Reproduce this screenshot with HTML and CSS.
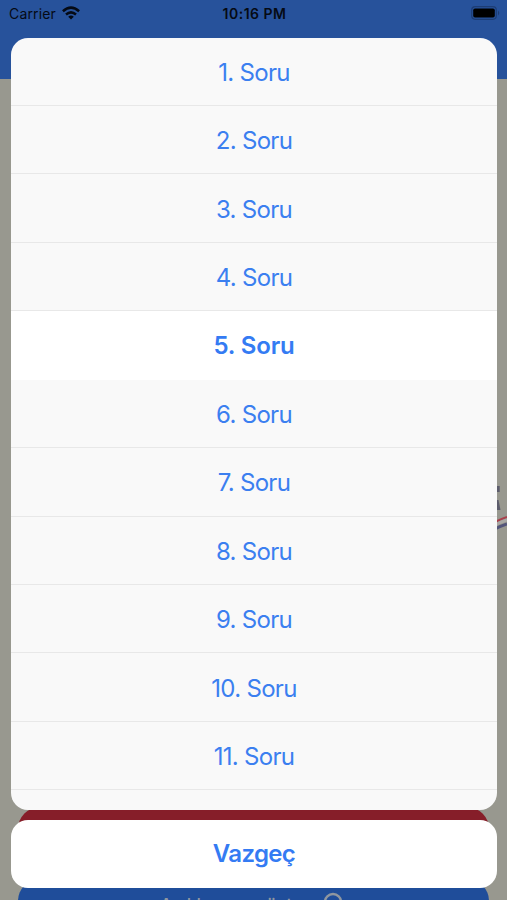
FILE: index.html
```html
<!DOCTYPE html>
<html lang="tr">
<head>
<meta charset="utf-8">
<title>Soru</title>
<link rel="stylesheet" href="styles.css">
</head>
<body>
<div class="screen">
  <div class="backdrop">
    <div class="navbar"></div>
    <div class="page">
      <svg class="artwork" viewBox="0 0 22 60" width="22" height="60">
        <path d="M13.2 11 L13.2 17" stroke="#5d5d6c" stroke-width="3"/>
        <path d="M11 25 L13.5 25 L15.5 35 L11 35 Z" fill="#5d5d6c"/>
        <path d="M10 47 Q16 44 22 42" stroke="#a9404c" stroke-width="2" fill="none"/>
        <path d="M10 50 Q16 47 22 45" stroke="#aaa8a5" stroke-width="3" fill="none"/>
        <path d="M10 54 Q16 51 22 49" stroke="#53557a" stroke-width="3" fill="none"/>
      </svg>
    </div>
    <div class="answer"></div>
    <div class="explain"><span>Açıklamayı göster</span>
      <svg width="24" height="24" viewBox="0 0 24 24" fill="none" stroke="#8f969f" stroke-width="2.4"><circle cx="10" cy="10" r="8"/><path d="M16 16 L22 22"/></svg>
    </div>
  </div>
  <div class="overlay">
    <header class="status">
      <div class="carrier"><span>Carrier</span>
        <svg width="18" height="14" viewBox="0 0 18 14" fill="none" stroke="#050a14" stroke-width="2.5"><path d="M.9 5.3 Q9 -2 17.1 5.3"/><path d="M4 8.5 Q9 4.2 14 8.5"/><path d="M9 13.5 L6.2 10.7 Q9 8.3 11.8 10.7 Z" fill="#050a14" stroke="none"/></svg>
      </div>
      <time>10:16 PM</time>
      <svg class="battery" width="29" height="14" viewBox="0 0 29 14"><rect x=".7" y=".7" width="24.6" height="12.6" rx="3.5" fill="none" stroke="#1d3d75" stroke-width="1.2"/><rect x="2.2" y="2.5" width="21.6" height="9" rx="1.8" fill="#000"/><path d="M27 4.5 Q29.5 7 27 9.5 Z" fill="#1d3d75"/></svg>
    </header>
    <div class="sheet">
      <div class="item">1. Soru</div>
      <div class="item">2. Soru</div>
      <div class="item">3. Soru</div>
      <div class="item">4. Soru</div>
      <div class="item selected">5. Soru</div>
      <div class="item">6. Soru</div>
      <div class="item">7. Soru</div>
      <div class="item">8. Soru</div>
      <div class="item">9. Soru</div>
      <div class="item">10. Soru</div>
      <div class="item">11. Soru</div>
    </div>
    <div class="cancel">Vazgeç</div>
  </div>
</div>
</body>
</html>
```
FILE: styles.css
```css
* { box-sizing: border-box; }
body { margin: 0; font-family: Inter, "Liberation Sans", sans-serif; }
.screen { position: relative; width: 507px; height: 900px; overflow: hidden; background: #98988f; }
.backdrop { height: 900px; display: flex; flex-direction: column; overflow: hidden; }
.navbar { height: 79px; flex: none; background: #27529b; }
.page { height: 728px; flex: none; display: flex; justify-content: flex-end; padding-top: 396px; }
.answer { height: 50px; flex: none; margin: 0 18px; border-radius: 22px; background: #861e29; }
.explain { height: 50px; flex: none; margin: 22px 18px 0; border-radius: 22px; background: #1f4d9a; color: #8f969f; display: flex; align-items: center; justify-content: center; gap: 14px; font-size: 17.5px; font-weight: 500; }
.explain svg { margin-top: -1px; }
.overlay { position: absolute; inset: 0; display: flex; flex-direction: column; }
.status { height: 37.5px; flex: none; display: grid; grid-template-columns: 1fr auto 1fr; align-items: start; padding: 6px 7px 0 9px; color: #050a14; font-size: 14px; line-height: 16px; }
.carrier { display: flex; gap: 6px; letter-spacing: .15px; }
.status time { font-weight: 600; letter-spacing: .5px; }
.battery { justify-self: end; }
.sheet { height: 772px; flex: none; margin: 0 10px 0 11px; border-radius: 17px; overflow: hidden; background: #f9f9f9; }
.item { height: 68.45px; padding-top: 2px; border-bottom: 1px solid #e8e8e8; display: flex; align-items: center; justify-content: center; color: #3b7ff0; font-size: 24px; letter-spacing: -.7px; }
.item.selected { background: #fff; border-color: #fff; font-weight: 600; letter-spacing: -.15px; color: #347bf3; }
.cancel { height: 68.5px; flex: none; margin: 10px 10px 0 11px; border-radius: 17px; background: #fff; display: flex; align-items: center; justify-content: center; color: #347bf3; font-size: 24px; font-weight: 600; letter-spacing: -.65px; }
```
